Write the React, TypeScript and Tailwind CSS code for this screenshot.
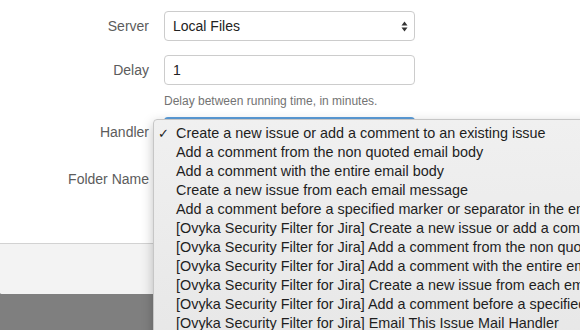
const handlers = [
  'Create a new issue or add a comment to an existing issue',
  'Add a comment from the non quoted email body',
  'Add a comment with the entire email body',
  'Create a new issue from each email message',
  'Add a comment before a specified marker or separator in the email body',
  '[Ovyka Security Filter for Jira] Create a new issue or add a comment to an existing issue',
  '[Ovyka Security Filter for Jira] Add a comment from the non quoted email body',
  '[Ovyka Security Filter for Jira] Add a comment with the entire email body',
  '[Ovyka Security Filter for Jira] Create a new issue from each email message',
  '[Ovyka Security Filter for Jira] Add a comment before a specified marker or separator in the email body',
  '[Ovyka Security Filter for Jira] Email This Issue Mail Handler',
  '[Ovyka Security Filter for Jira] Regex Comment Handler',
];

function SelectArrows() {
  return (
    <svg width="7" height="11" viewBox="0 0 7 11" className="shrink-0">
      <path d="M3.5 0.5 L6.5 4.5 L0.5 4.5 Z" fill="#333" />
      <path d="M3.5 10.5 L6.5 6.5 L0.5 6.5 Z" fill="#333" />
    </svg>
  );
}

export default function App() {
  return (
    <div
      className="relative h-[330px] w-[580px] overflow-hidden bg-[#7f7f7f]"
      style={{ fontFamily: '"Liberation Sans", Arial, sans-serif' }}
    >
      {/* Dialog */}
      <div className="-ml-px w-[600px] rounded-bl-[4px] bg-white">
        <div className="h-[243px] pt-[11px]">
          <div className="grid grid-cols-[150px_251px] gap-x-[15px]">
            {/* Server */}
            <label className="flex h-[30px] items-center justify-end text-[14px] text-[#5c5c5c]">Server</label>
            <div className="flex h-[30px] items-center justify-between rounded-[4px] border border-[#cccccc] bg-white pl-[8px] pr-[6px] text-[14px] text-[#222]">
              <span>Local Files</span>
              <SelectArrows />
            </div>

            {/* Delay */}
            <label className="mt-[14px] flex h-[30px] items-center justify-end text-[14px] text-[#5c5c5c]">Delay</label>
            <div className="mt-[14px] flex h-[30px] items-center rounded-[4px] border border-[#cccccc] bg-white pl-[8px] text-[14px] text-[#222]">
              1
            </div>
            <div />
            <p className="mt-[8px] whitespace-nowrap text-[12px] leading-[16px] text-[#737373]">
              Delay between running time, in minutes.
            </p>

            {/* Handler */}
            <label className="mt-[8px] flex h-[30px] items-center justify-end text-[14px] text-[#5c5c5c]">Handler</label>
            <div className="mt-[8px] h-[30px] rounded-[4px] border-2 border-[#5b9dd9] bg-white" />

            {/* Folder Name */}
            <label className="mt-[17px] flex h-[30px] items-center justify-end text-[14px] text-[#5c5c5c]">Folder Name</label>
            <div className="mt-[17px] h-[30px] rounded-[4px] border border-[#cccccc] bg-white" />
          </div>
        </div>
        <div className="h-[51px] rounded-bl-[4px] border-t border-[#d2d2d2] bg-[#f3f3f3]" />
      </div>

      {/* Native select menu */}
      <div className="absolute left-[153px] top-[119px] w-max min-w-[460px] rounded-[4px] border border-[#c6c6c6] bg-gradient-to-b from-[#f0f0f0] to-[#e7e7e7] pt-[4px] pr-[16px] shadow-[0_4px_12px_rgba(0,0,0,0.25)]">
        {handlers.map((h, i) => (
          <div key={i} className="flex h-[19px] items-center whitespace-nowrap text-[14.4px] text-[#1e1e1e]">
            <span className="w-[22px] shrink-0 pl-[4px] text-[13px]">{i === 0 ? '✓' : ''}</span>
            <span>{h}</span>
          </div>
        ))}
      </div>
    </div>
  );
}
